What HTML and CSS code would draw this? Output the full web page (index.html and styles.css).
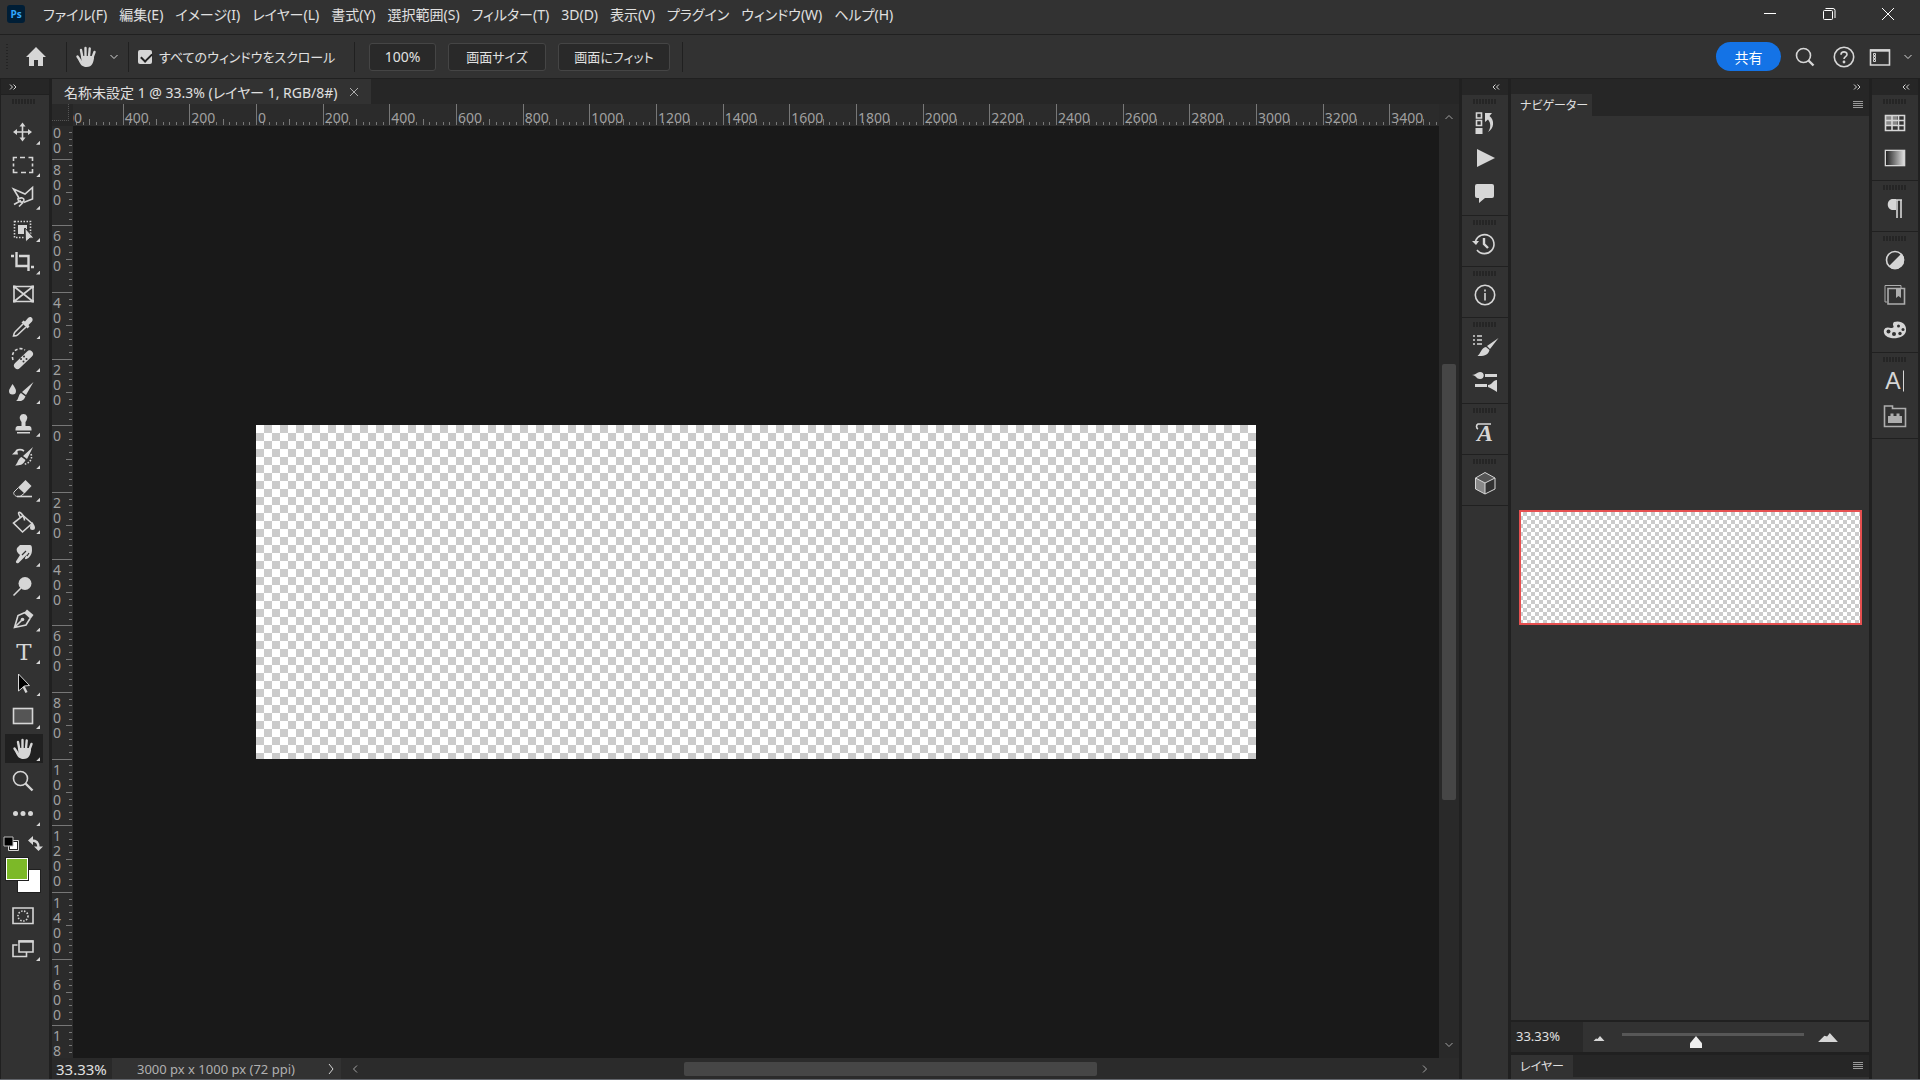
FILE: index.html
```html
<!DOCTYPE html>
<html lang="ja">
<head>
<meta charset="utf-8">
<title>名称未設定 1</title>
<link rel="stylesheet" href="styles.css">
</head>
<body>
<div class="app">
  <header class="menubar">
    <svg class="logo" viewBox="0 0 18 18"><rect width="18" height="18" rx="3" fill="#001e36"/><text x="9" y="13" text-anchor="middle" class="logo-text">Ps</text></svg>
    <nav class="menus">
      <button>ファイル(F)</button><button>編集(E)</button><button>イメージ(I)</button><button>レイヤー(L)</button><button>書式(Y)</button><button>選択範囲(S)</button><button>フィルター(T)</button><button>3D(D)</button><button>表示(V)</button><button>プラグイン</button><button>ウィンドウ(W)</button><button>ヘルプ(H)</button>
    </nav>
    <div class="window-controls">
      <button aria-label="最小化"><svg viewBox="0 0 14 14"><path class="thin" d="M1 6.5h12"/></svg></button>
      <button aria-label="元に戻す"><svg viewBox="0 0 14 14"><rect class="thin" x="1.5" y="3.500" width="9" height="9" rx="1"/><path class="thin" d="M3.500 1.500h7.500a2 2 0 0 1 2 2v7.500"/></svg></button>
      <button aria-label="閉じる"><svg viewBox="0 0 14 14"><path class="thin" d="M1 1l12 12M13 1L1 13"/></svg></button>
    </div>
  </header>

  <div class="options">
    <span class="grip-v"></span>
    <button class="home" aria-label="ホーム"><svg viewBox="0 0 22 20"><path class="f" d="M11 0L1 10h3v9h5v-6h4v6h5v-9h3z"/></svg></button>
    <button class="cell hand-opt" aria-label="手のひらツール"><svg class="i24" viewBox="0 0 24 24"><use href="#hand"/></svg><svg class="chev" viewBox="0 0 8 6"><path class="s" d="M.5 1L4 4.500L7.500 1"/></svg></button>
    <div class="cell scroll-all"><input type="checkbox" id="scroll-all" checked><label for="scroll-all">すべてのウィンドウをスクロール</label></div>
    <div class="cell fit-buttons"><button class="box w100">100%</button><button class="box wsize">画面サイズ</button><button class="box wfit">画面にフィット</button></div>
    <div class="cell options-end">
      <button class="share">共有</button>
      <button aria-label="検索"><svg class="i20" viewBox="0 0 20 20"><circle class="s2" cx="8.500" cy="8.500" r="7"/><path class="s3" d="M13.500 13.500l5 5"/></svg></button>
      <button aria-label="ヘルプ"><svg class="i22" viewBox="0 0 22 22"><circle class="s2" cx="11" cy="11" r="9.700"/><path class="s2" d="M8 8.700c0-3.700 6-3.700 6-.3 0 2.200-3 2.300-3 4.600"/><circle class="f" cx="11" cy="16" r="1.400"/></svg></button>
      <button class="workspace" aria-label="ワークスペース"><svg class="i22" viewBox="0 0 22 22"><path class="s2" d="M1.500 4h19v15h-19z"/><path class="s3" d="M1 4.500h20"/><path class="s" d="M4.500 7.500h2v2h-2zM4.500 10.500h2v2h-2zM4.500 13.500h2v2h-2z"/></svg><svg class="chev" viewBox="0 0 8 6"><path class="s" d="M.5 1L4 4.500L7.500 1"/></svg></button>
    </div>
  </div>

  <div class="workspace-grid">
    <aside class="toolbar">
      <button class="collapse to-start" aria-label="展開"><svg viewBox="0 0 8 6"><path class="s" d="M1 .5L3.500 3L1 5.500M4.500 .5L7 3L4.500 5.500"/></svg></button>
      <div class="tool-body">
        <span class="grip"></span>
        <div class="tools">
          <button class="more" aria-label="移動"><svg viewBox="0 0 24 24"><path class="s2" d="M11.500 5v14M4.500 12h14"/><path class="f" d="M11.500 2.500l3 4h-6zM11.500 21.500l3-4h-6zM2 12l4-3v6zM21 12l-4-3v6z"/></svg></button>
          <button class="more" aria-label="長方形選択"><svg viewBox="0 0 24 24"><path class="s2" d="M2.500 8V4.500H6M9 4.500h5M17.500 4.500h4V8M21.500 10.500v3M21.500 16v3.500H18M15 19.500h-5M6.500 19.500h-4V16M2.500 13.500v-3"/></svg></button>
          <button class="more" aria-label="多角形選択"><svg viewBox="0 0 24 24"><path class="s2" d="M8 13L2.500 4L14 9l7.500-6.500v11.500l-9 3.500"/><path class="s2" d="M8 14c2-2 5-1 5 1s-3 3-5 1-1-3 0-3M3 19.500l7-4M8 21.500l4-4"/></svg></button>
          <button class="more" aria-label="オブジェクト選択"><svg viewBox="0 0 24 24"><path class="s2 dots" d="M3.500 3.500h16v16h-16z"/><path class="f" d="M7 7h9v5l-3-2v6H7z"/><path class="f edge" d="M14 10l9 10-4 .2L14.500 24z"/></svg></button>
          <button class="more" aria-label="切り抜き"><svg viewBox="0 0 24 24"><path class="s3" d="M5.500 2v14h11M0 6h3M8 6h9.500v15M20 17h3"/></svg></button>
          <button aria-label="フレーム"><svg viewBox="0 0 24 24"><path class="s2" d="M3 4.500h19v15H3zM3 4.500l19 15M22 4.500l-19 15"/><path class="f" d="M2 3.500h2.500V6H2zM20.500 3.500H23V6h-2.500zM2 18h2.500v2.500H2zM20.500 18H23v2.500h-2.500z"/></svg></button>
          <button class="more" aria-label="スポイト"><svg viewBox="0 0 24 24"><path class="f" d="M10.500 7.500l2-2 1.500 1 3-3.500c3-3 6 1 4 3.500L17.500 10l1 1.500-2 2z"/><path class="s2" d="M12 9L4 17c-1 1-1 2-1.500 4 2 0 3 0 4-1L15 12"/></svg></button>
          <button class="more" aria-label="修復ブラシ"><svg viewBox="0 0 24 24"><path class="bandage" d="M6.500 18.500L18.500 7"/><path class="s2 dash" d="M2 13C-1 4 8-1 14 3"/><g fill="#323232"><circle cx="10" cy="12" r="1"/><circle cx="13" cy="9.500" r="1"/><circle cx="12.500" cy="14.500" r="1"/><circle cx="15.500" cy="12" r="1"/></g></svg></button>
          <button class="more" aria-label="ブラシ"><svg viewBox="0 0 24 24"><path class="f" d="M1.500 4c2 3 3.500 5 3.500 7a3.500 3.500 0 0 1-7 0c0-2 2-4 3.500-7z"/><path class="f" d="M22.500 2L15 15l-4-3zM10 13l4.500 3.500C12 22 9 21 5 21c3-2 2-6 5-8z"/></svg></button>
          <button class="more" aria-label="コピースタンプ"><svg viewBox="0 0 24 24"><path class="f" d="M12.500 2a4 4 0 0 1 3 6.500l-1 1.500v4h4a3 3 0 0 1 2 3v1.500h-16V17a3 3 0 0 1 2-3h4v-4L9.500 8.500a4 4 0 0 1 3-6.500zM6 20h13v1.500H6z"/></svg></button>
          <button class="more" aria-label="ヒストリーブラシ"><svg viewBox="0 0 24 24"><path class="f" d="M1 9.500l5-5 1 5z"/><path class="s2" d="M5 6c3-2 5-2 8 0"/><path class="s2 dots" d="M20 9c2 5-2 10-7 10"/><path class="f" d="M22 2l-6 12-4-3zM10.500 12l4 3C12 20 9 20.500 4 20.500c3-2 2.500-6.500 6.500-8.500z"/></svg></button>
          <button class="more" aria-label="消しゴム"><svg viewBox="0 0 24 24"><path class="f" d="M14.500 3l6 6-7 7.500-6.500-6z"/><path class="s" d="M7 11l-4 4c-1 2 1 4 3 4.500h3l4-3"/><path class="s2" d="M6 19.500h15"/></svg></button>
          <button class="more" aria-label="塗りつぶし"><svg viewBox="0 0 24 24"><path class="s2" d="M12 5.500l9 8-9.500 8.500L2.500 13z"/><path class="s2" d="M9.500 7.500C7 4 7 1.500 9 2.500s4.500 5 4.500 8"/><path class="f" d="M21.500 12c1.500 3 2.500 4 2.500 5.500a2.500 2.500 0 0 1-5 0c0-1.500 1-2.500 2.500-5.500z"/></svg></button>
          <button class="more" aria-label="指先"><svg viewBox="0 0 24 24"><path class="f" d="M6 6l3-3h10c2 0 2 3 2 5 0 5-3 8-5.500 9-1.500.5-2-.5-1-2l2-3-9 9c-2 1-3.500-1-2-2.500L9 13c-3-2-4-5-3-7z"/><path class="cut" d="M11 13l4-4M16 14l2-3"/></svg></button>
          <button class="more" aria-label="覆い焼き"><svg viewBox="0 0 24 24"><circle class="f" cx="14" cy="8.500" r="6.500"/><path class="s2" d="M10 13l-7.500 7.500"/></svg></button>
          <button class="more" aria-label="ペン"><svg viewBox="0 0 24 24"><path class="f" d="M16 2.500l6.500 5.500-3 4-6.500-6z"/><path class="s2" d="M14 5.500L7 8.500 3.500 20.500 15 18l4-6.500M3.500 20.500l7-7"/><circle class="f" cx="11.500" cy="12.500" r="1.800"/></svg></button>
          <button class="more" aria-label="文字"><svg viewBox="0 0 24 24"><text x="13" y="21" text-anchor="middle" class="type-icon">T</text></svg></button>
          <button class="more" aria-label="パス選択"><svg viewBox="0 0 24 24"><path class="path-arrow" d="M7.500 2l11 11.500-5 .5-6 5z"/><path class="s3" d="M12.500 14.500l3 6"/></svg></button>
          <button class="more" aria-label="長方形"><svg viewBox="0 0 24 24"><rect class="s2 fill-mid" x="2.500" y="4.500" width="19" height="15"/></svg></button>
          <button class="more active" aria-label="手のひら"><svg viewBox="0 0 24 24"><g id="hand"><path class="finger" d="M8.300 12L7 5M11.500 11.500V3M15 11.500L15.700 3.500M18.300 13L20.500 7M6.500 16L3.500 11.500"/><path class="f" d="M7 11h12.500l.5 2c-.5 4-1.500 9-7.500 9-4 0-6-2-8-7l3 1z"/></g></svg></button>
          <button aria-label="ズーム"><svg viewBox="0 0 24 24"><circle class="s2" cx="9.500" cy="9.500" r="7"/><path class="s3" d="M14.500 14.500l7 7"/></svg></button>
          <button class="more" aria-label="ツールバーを編集"><svg viewBox="0 0 24 24"><circle class="f" cx="4.500" cy="11.500" r="2.500"/><circle class="f" cx="12" cy="11.500" r="2.500"/><circle class="f" cx="19.500" cy="11.500" r="2.500"/></svg></button>
        </div>
        <div class="swatch-tools">
          <button aria-label="初期設定の色"><svg class="i16" viewBox="0 0 16 16"><path d="M6 5h9v9H6z" fill="#fff" stroke="#222" stroke-width="2"/><path class="s" d="M5.500 4.500h10v10h-10z"/><path d="M1 1h9v9H1z" fill="#000" stroke="#bbb"/></svg></button>
          <button aria-label="描画色と背景色を入れ替え"><svg class="i16" viewBox="0 0 16 16"><path class="s3" d="M5 4.500c5 0 6.500 3 6.500 7"/><path class="f" d="M1 4.500L6 0v9zM7 10.500h9L11.500 15z"/></svg></button>
        </div>
        <div class="colors"><button class="bg-color" aria-label="背景色"></button><button class="fg-color" aria-label="描画色"></button></div>
        <div class="modes">
          <button aria-label="クイックマスク"><svg viewBox="0 0 24 24"><path class="s2" d="M2 4h20v15.500H2z"/><circle class="s2 dots" cx="12" cy="12" r="5"/></svg></button>
          <button class="more" aria-label="スクリーンモード"><svg viewBox="0 0 24 24"><path class="s2" d="M6.500 8H2v11.500h13.500V15"/><path class="s2" d="M8 4h14v11H8z"/><path class="s3" d="M7.500 4.500h15"/></svg></button>
        </div>
      </div>
    </aside>

    <main class="document">
      <div class="tabs"><div class="tab"><span>名称未設定 1 @ 33.3% (レイヤー 1, RGB/8#)</span><button class="dim" aria-label="閉じる"><svg viewBox="0 0 10 10"><path class="s" d="M1 1l8 8M9 1L1 9"/></svg></button></div></div>
      <div class="stage">
        <div class="ruler-corner"></div>
        <div class="ruler ruler-x">
          <div class="strip">
            <svg class="ticks"><defs><pattern id="tx" width="200" height="21" patternUnits="userSpaceOnUse"><path class="tick" d="M.5 0v21M67.500 0v21M133.500 0v21M33.500 15v6M100.500 15v6M167.500 15v6M7.500 18v3M13.500 18v3M20.500 18v3M27.500 18v3M40.500 18v3M47.500 18v3M53.500 18v3M60.500 18v3M73.500 18v3M80.500 18v3M87.500 18v3M93.500 18v3M107.500 18v3M113.500 18v3M120.500 18v3M127.500 18v3M140.500 18v3M147.500 18v3M153.500 18v3M160.500 18v3M173.500 18v3M180.500 18v3M187.500 18v3M193.500 18v3"/></pattern></defs><rect width="100%" height="100%" fill="url(#tx)"/></svg>
            <span>600</span><span>400</span><span>200</span><span>0</span><span>200</span><span>400</span><span>600</span><span>800</span><span>1000</span><span>1200</span><span>1400</span><span>1600</span><span>1800</span><span>2000</span><span>2200</span><span>2400</span><span>2600</span><span>2800</span><span>3000</span><span>3200</span><span>3400</span>
          </div>
        </div>
        <div class="ruler ruler-y">
          <div class="strip">
            <svg class="ticks"><defs><pattern id="ty" width="20" height="200" patternUnits="userSpaceOnUse"><path class="tick" d="M0 .5h20M0 67.500h20M0 133.500h20M14 33.500h6M14 100.500h6M14 167.500h6M17 7.500h3M17 13.500h3M17 20.500h3M17 27.500h3M17 40.500h3M17 47.500h3M17 53.500h3M17 60.500h3M17 73.500h3M17 80.500h3M17 87.500h3M17 93.500h3M17 107.500h3M17 113.500h3M17 120.500h3M17 127.500h3M17 140.500h3M17 147.500h3M17 153.500h3M17 160.500h3M17 173.500h3M17 180.500h3M17 187.500h3M17 193.500h3"/></pattern></defs><rect width="20" height="100%" fill="url(#ty)"/></svg>
            <span>1000</span><span>800</span><span>600</span><span>400</span><span>200</span><span>0</span><span>200</span><span>400</span><span>600</span><span>800</span><span>1000</span><span>1200</span><span>1400</span><span>1600</span><span>1800</span>
          </div>
        </div>
        <div class="canvas-area"><div class="artboard"></div></div>
        <div class="scroll-y">
          <button aria-label="上へ"><svg class="chev" viewBox="0 0 8 6"><path class="s" d="M.5 5L4 1.500L7.500 5"/></svg></button>
          <div class="track-y"><div class="thumb"></div></div>
          <button aria-label="下へ"><svg class="chev" viewBox="0 0 8 6"><path class="s" d="M.5 1L4 4.500L7.500 1"/></svg></button>
        </div>
      </div>
      <footer class="status">
        <input class="zoom-value" aria-label="ズーム率" value="33.33%">
        <div class="doc-info"><span>3000 px x 1000 px (72 ppi)</span><button aria-label="情報"><svg viewBox="0 0 6 12"><path class="s" d="M1 1l4 5-4 5"/></svg></button></div>
        <div class="scroll-x">
          <button aria-label="左へ"><svg viewBox="0 0 6 8"><path class="s" d="M5 .5L1.500 4L5 7.500"/></svg></button>
          <div class="track-x"><div class="thumb"></div></div>
          <button aria-label="右へ"><svg viewBox="0 0 6 8"><path class="s" d="M1 .5L4.500 4L1 7.500"/></svg></button>
        </div>
      </footer>
    </main>

    <aside class="dock">
      <button class="collapse to-end" aria-label="展開"><svg viewBox="0 0 8 6"><path class="s" d="M3.500 .5L1 3L3.500 5.500M7 .5L4.500 3L7 5.500"/></svg></button>
      <div class="group"><span class="grip"></span>
        <button aria-label="バージョン"><svg viewBox="0 0 24 24"><path class="s2" d="M3.500 2h5v5h-5zM3.500 9.500h5v5h-5z"/><path class="f" d="M2.500 17h7v6h-7zM12 2h7l-2.500 3C22 9 21 18 15 21c3-4 3-9 0-12.500L12 11z"/></svg></button>
        <button aria-label="アクション"><svg viewBox="0 0 24 24"><path class="f" d="M4 3l18 9L4 21z"/></svg></button>
        <button aria-label="コメント"><svg viewBox="0 0 24 24"><path class="f" d="M4 3h15a2 2 0 0 1 2 2v10a2 2 0 0 1-2 2h-7l-6 5v-5H4a2 2 0 0 1-2-2V5a2 2 0 0 1 2-2z"/></svg></button></div>
      <div class="group"><span class="grip"></span>
        <button aria-label="ヒストリー"><svg viewBox="0 0 24 24"><path class="s2" d="M2.500 9A9.500 9.500 0 1 1 4 18"/><path class="f" d="M-1 9h7l-3 4z"/><path class="s3" d="M11 6v6l4 4"/></svg></button></div>
      <div class="group"><span class="grip"></span>
        <button aria-label="情報"><svg viewBox="0 0 24 24"><circle class="s2" cx="12" cy="12" r="9.700"/><path class="s2" d="M12 10v7.500M12 6.500v2"/></svg></button></div>
      <div class="group"><span class="grip"></span>
        <button aria-label="ブラシ設定"><svg viewBox="0 0 24 24"><path class="s2" d="M0 2h2M0 6h2M0 10h2M4 2h5M4 6h5M4 10h5"/><path class="f" d="M25.500 4L17 15l-3-3zM13 13l3.500 3C15 22 10 22 4.500 22c3-2 3.500-8 8.500-9z"/></svg></button>
        <button aria-label="ブラシ"><svg viewBox="0 0 24 24"><path class="f" d="M-1 6c4 0 5-3 8-3 5 0 5 7 0 7-4 0-4-4-8-4zM12 5h12v3H12zM2 15h12v3H2zM15 16c4 0 5-5 9-5v12c-3-2-6-4-9-5z"/></svg></button></div>
      <div class="group"><span class="grip"></span>
        <button aria-label="字形"><svg viewBox="0 0 24 24"><text x="12" y="21" text-anchor="middle" class="glyph-icon">A</text><path class="s2" d="M9 4H5c-2 1-2 4 0 5M9 4h9"/></svg></button></div>
      <div class="group"><span class="grip"></span>
        <button aria-label="3D"><svg viewBox="0 0 24 24"><path fill="#555" d="M12 1.500L22 7l-10 5L2.500 7z"/><path fill="#888" d="M2.500 7l9.500 5v11l-9.500-5z"/><path class="s" d="M12 1.500L22 7v11l-10 5-9.500-5V7zM2.500 7l9.500 5 10-5M12 12v11"/></svg></button></div>
    </aside>

    <aside class="panel">
      <button class="collapse to-end" aria-label="折りたたむ"><svg viewBox="0 0 8 6"><path class="s" d="M1 .5L3.500 3L1 5.500M4.500 .5L7 3L4.500 5.500"/></svg></button>
      <div class="panel-tabs"><button class="panel-tab">ナビゲーター</button><button class="panel-menu" aria-label="メニュー"></button></div>
      <div class="navigator"><div class="preview"></div></div>
      <div class="nav-controls">
        <input aria-label="ズーム率" value="33.33%">
        <button aria-label="ズームアウト"><svg class="hill-s" viewBox="0 0 22 10"><path class="f" d="M0 10l5-5 3 1 5-6 9 10z"/></svg></button>
        <input type="range" aria-label="ズーム" min="0" max="100" value="40">
        <button aria-label="ズームイン"><svg class="hill-l" viewBox="0 0 22 10"><path class="f" d="M0 10l7-7 3 1 3-4 9 10z"/></svg></button>
      </div>
      <div class="panel-tabs layers"><button class="panel-tab">レイヤー</button><button class="panel-menu" aria-label="メニュー"></button></div>
    </aside>

    <aside class="dock">
      <button class="collapse to-end" aria-label="展開"><svg viewBox="0 0 8 6"><path class="s" d="M3.500 .5L1 3L3.500 5.500M7 .5L4.500 3L7 5.500"/></svg></button>
      <div class="group"><span class="grip"></span>
        <button aria-label="スウォッチ"><svg viewBox="0 0 24 24"><path fill="#888" d="M2 4h12v10H2z"/><path class="s2" d="M2.500 4.500h19v15h-19zM2.500 9.500h19M2.500 14.500h19M9 4.500v15M15.500 4.500v15"/></svg></button>
        <button aria-label="グラデーション"><svg viewBox="0 0 24 24"><defs><linearGradient id="grad"><stop offset="0" stop-color="#222"/><stop offset="1" stop-color="#ddd"/></linearGradient></defs><rect class="s2" x="2.500" y="4.500" width="19" height="15"/><path fill="url(#grad)" d="M3 5h18v14H3z"/></svg></button></div>
      <div class="group"><span class="grip"></span>
        <button aria-label="段落"><svg viewBox="0 0 24 24"><path class="f" d="M13 2v11h-3C3 13 3 2 10 2z"/><path class="s2" d="M10 3h9M14 3v18M18 3v18"/></svg></button></div>
      <div class="group"><span class="grip"></span>
        <button aria-label="色調補正"><svg viewBox="0 0 24 24"><circle class="s2" cx="12" cy="12" r="8.500"/><path class="f" d="M18.500 5.500a9 9 0 0 1-13 13z"/></svg></button>
        <button class="dim" aria-label="ライブラリ"><svg viewBox="0 0 24 24"><path class="s" d="M4 19H2V2.500h16V5"/><path class="s2" d="M5 5.500h16.500V21H5z"/><path class="f" d="M13 6h5v9l-2.500-2L13 15z"/></svg></button>
        <button aria-label="カラー"><svg viewBox="0 0 24 24"><path class="f" d="M11 4c7-2 13 2 12 9-1 6-9 8-15 7-5-1-8-4-7-8 1-3 4-3 7-2 3 0 3-1 2-3 0-1 0-2 1-3z"/><g fill="#323232"><circle cx="5.500" cy="13.500" r="2"/><circle cx="11" cy="16" r="2"/><circle cx="17" cy="15.500" r="1.700"/><circle cx="20" cy="11.500" r="1.500"/><circle cx="15.500" cy="8" r="1.500"/></g></svg></button></div>
      <div class="group"><span class="grip"></span>
        <button aria-label="文字"><svg viewBox="0 0 24 24"><text x="10" y="20" text-anchor="middle" class="char-icon">A</text><path class="s" d="M20.500 1.500v21"/></svg></button>
        <button class="dim" aria-label="プラグイン"><svg viewBox="0 0 24 24"><path class="s2" d="M1.500 2h8v2.500h13v18h-21z"/><path class="f" d="M5 12h2.500V9.500h3V12h3V9.500h3V12H19v7H5z"/></svg></button></div>
    </aside>
  </div>
</div>
</body>
</html>
```
FILE: styles.css
```css
:root {
  --panel: #323232;
  --well: #262626;
  --line: #202020;
  --field: #292929;
  --icon: #d6d6d6;
  --checker: repeating-conic-gradient(#cbcbcb 0 25%, #fff 0 50%);
}
* { box-sizing: border-box; }
body {
  margin: 0;
  background: var(--well);
  color: #e0e0e0;
  font-family: "Noto Sans", "Noto Sans CJK JP", sans-serif;
  font-size: 14px;
  font-feature-settings: "palt";
}
button, input {
  margin: 0;
  padding: 0;
  border: 0;
  background: none;
  color: inherit;
  font: inherit;
  font-feature-settings: inherit;
}
button { display: flex; align-items: center; justify-content: center; white-space: nowrap; }
svg { display: block; overflow: visible; flex: none; }

.f { fill: var(--icon); }
.s, .s2, .s3, .thin { fill: none; stroke: var(--icon); }
.s2 { stroke-width: 1.6; }
.s3 { stroke-width: 2.4; }
.thin { stroke: #fff; }
.dots { stroke-dasharray: 1.500 1.500; }
.dash { stroke-dasharray: 3 2; }
.edge { stroke: var(--panel); }
.cut { fill: none; stroke: var(--panel); stroke-width: 1.200; }
.finger { fill: none; stroke: var(--icon); stroke-width: 2.400; stroke-linecap: round; }
.bandage { fill: none; stroke: var(--icon); stroke-width: 7; stroke-linecap: round; }
.path-arrow { fill: #000; stroke: var(--icon); }
.fill-mid { fill: #555; }
.type-icon { fill: var(--icon); font: 23px "DejaVu Serif", serif; }
.glyph-icon { fill: var(--icon); font: italic bold 24px "Liberation Serif", serif; }
.char-icon { fill: var(--icon); font: 23px "Liberation Sans", sans-serif; }
.logo-text { fill: #31a8ff; font: bold 10px "Open Sans", sans-serif; }
.i16 { width: 16px; height: 16px; }
.i20 { width: 20px; height: 20px; }
.i22 { width: 22px; height: 22px; }
.i24 { width: 24px; height: 24px; }
.chev { width: 8px; height: 6px; }

.app {
  height: 100vh;
  display: grid;
  grid-template-rows: 35px 44px 1fr;
  border-bottom: 1px solid #62656b;
}

/* Menu bar */
.menubar {
  display: flex;
  align-items: center;
  background: var(--panel);
  border-bottom: 1px solid var(--line);
  padding: 0 18px 6px 7px;
}
.logo { width: 18px; height: 18px; margin-right: 18px; }
.menus { display: flex; gap: 12px; flex: 1; }
.window-controls { display: flex; gap: 31px; }
.window-controls button { width: 28px; height: 28px; }
.window-controls svg { width: 14px; height: 14px; }

/* Options bar */
.options {
  display: flex;
  align-items: center;
  background: var(--panel);
  border-bottom: 1px solid var(--line);
}
.grip-v {
  width: 2px;
  height: 26px;
  margin-left: 6px;
  background: repeating-linear-gradient(#242424 0 1px, transparent 1px 3px);
}
.home { width: 58px; padding-right: 2px; }
.home svg { width: 22px; height: 20px; }
.cell {
  display: flex;
  align-items: center;
  height: 30px;
  border-left: 1px solid var(--line);
}
.hand-opt { width: 62px; gap: 12px; padding-right: 3px; }
.scroll-all { width: 226px; padding-left: 9px; gap: 7px; font-size: 13px; }
.scroll-all input {
  appearance: none;
  width: 14px;
  height: 14px;
  border-radius: 2px;
  background: var(--icon);
}
.scroll-all input:checked::before {
  content: "";
  display: block;
  width: 9px;
  height: 5px;
  margin: 3px 0 0 3px;
  border: solid #222;
  border-width: 0 0 2px 2px;
  transform: rotate(-45deg);
}
.fit-buttons { width: 328px; padding-left: 14px; gap: 12px; }
.box {
  height: 28px;
  border: 1px solid #454545;
  border-radius: 3px;
  background: var(--field);
  font-size: 13px;
}
.w100 { width: 67px; font-size: 14px; }
.wsize { width: 98px; }
.wfit { width: 112px; }
.options-end { flex: 1; justify-content: flex-end; gap: 18px; padding-right: 8px; }
.share {
  width: 65px;
  height: 29px;
  border-radius: 15px;
  background: #1473e6;
  color: #fff;
  margin-right: -4px;
}
.workspace { gap: 13px; margin-left: -4px; }

/* Workspace columns */
.workspace-grid {
  display: grid;
  grid-template-columns: 48px 1fr 46px 358px 46px;
  column-gap: 3px;
  padding: 0 2px 0 1px;
  min-height: 0;
  background: var(--line);
}
.collapse {
  width: 100%;
  height: 15px;
  flex: none;
  padding: 0 8px;
  background: var(--well);
}
.collapse svg { width: 8px; height: 6px; }
.to-start { justify-content: flex-start; }
.to-end { justify-content: flex-end; }
.grip {
  display: block;
  width: 24px;
  height: 5px;
  background: repeating-linear-gradient(90deg, #252525 0 2px, transparent 2px 3px);
}

/* Tools */
.toolbar { display: flex; flex-direction: column; min-height: 0; }
.tool-body {
  flex: 1;
  background: var(--panel);
  border-top: 1px solid var(--line);
  padding: 4px 5px 0 4px;
}
.tool-body > .grip { margin: 0 0 12px 7px; }
.tools {
  height: 714px;
  display: grid;
  grid-template-rows: repeat(22, 1fr);
  align-items: center;
}
.tools button, .modes button {
  position: relative;
  width: 38px;
  height: 29px;
  padding-right: 2px;
}
.tools svg, .modes svg { width: 24px; height: 24px; }
.more::after {
  content: "";
  position: absolute;
  right: 3px;
  bottom: 2px;
  width: 4px;
  height: 4px;
  background: var(--icon);
  clip-path: polygon(100% 0, 100% 100%, 0 100%);
}
.tools .active { background: #202020; }
.swatch-tools { display: flex; justify-content: space-between; padding: 6px 1px 0 0; margin-left: -2px; }
.colors { position: relative; height: 36px; margin-top: 5px; }
.colors button {
  position: absolute;
  width: 24px;
  height: 24px;
  border: 1px solid var(--line);
}
.fg-color { left: 0; top: 0; background: #7cb928; box-shadow: inset 0 0 0 1px #fff; }
.bg-color { left: 12px; top: 12px; background: #fff; }
.modes { padding-top: 8px; display: grid; gap: 4px; }

/* Document */
.document {
  display: grid;
  grid-template-rows: 25px 1fr 21px;
  min-width: 0;
  min-height: 0;
  background: var(--well);
}
.tabs { display: flex; }
.tab {
  display: flex;
  align-items: center;
  gap: 11px;
  padding: 0 12px;
  background: var(--panel);
  white-space: nowrap;
}
.tab svg { width: 10px; height: 10px; }
.stage {
  display: grid;
  grid-template: 22px minmax(0, 1fr) / 21px minmax(0, 1fr) 20px;
  min-height: 0;
}
.ruler-corner {
  background: var(--field);
  border-right: 1px dotted #555;
  border-bottom: 1px dotted #555;
  margin: 0 4px 5px 0;
}
.ruler {
  display: flex;
  justify-content: center;
  overflow: hidden;
  background: #2b2b2b;
  color: #a0a0a0;
  line-height: 15px;
}
.strip { position: relative; flex: none; display: grid; }
.ticks { position: absolute; width: 100%; height: 100%; }
.tick { stroke: #777; }
.ruler-x .strip { width: 1400px; height: 21px; grid-template-columns: repeat(21, 1fr); }
.ruler-x span { padding: 6px 0 0 2px; position: relative; }
.ruler-y { grid-area: 2 / 1; align-items: center; }
.ruler-y .strip { width: 21px; height: 1000px; grid-template-rows: repeat(15, 1fr); }
.ruler-y span {
  position: relative;
  width: 10px;
  padding: 3px 0 0 1px;
  word-break: break-all;
  overflow: hidden;
}
.canvas-area {
  grid-area: 2 / 2;
  display: grid;
  place-content: center;
  overflow: hidden;
  background: #191919;
}
.artboard {
  width: 1000px;
  height: 334px;
  background: var(--checker) 0 0 / 16px 16px;
}
.scroll-y {
  grid-area: 1 / 3 / 3 / 4;
  display: flex;
  flex-direction: column;
  align-items: center;
  background: var(--field);
}
.scroll-y button { width: 20px; height: 26px; opacity: .7; }
.track-y { flex: 1; width: 14px; padding: 234px 0 232px; display: grid; }
.thumb { background: #464646; border-radius: 2px; }
.status { display: flex; background: var(--field); }
.zoom-value { width: 60px; padding-left: 4px; background: var(--field); color: #e0e0e0; font-size: 15px; }
.doc-info {
  width: 229px;
  display: flex;
  align-items: center;
  justify-content: space-between;
  padding: 0 7px 0 25px;
  background: var(--panel);
  color: #b0b0b0;
  font-size: 13px;
}
.doc-info svg { width: 6px; height: 12px; }
.scroll-x { flex: 1; display: flex; align-items: center; padding-right: 20px; background: #2b2b2b; }
.scroll-x button { width: 28px; height: 20px; opacity: .7; }
.scroll-x svg { width: 6px; height: 8px; }
.track-x { flex: 1; height: 14px; padding: 0 314px 0 315px; display: grid; }

/* Icon docks */
.dock { background: var(--panel); }
.dock .collapse { height: 16px; }
.group {
  position: relative;
  display: flex;
  flex-direction: column;
  align-items: center;
  padding: 10px 0 5px;
  border-bottom: 1px solid var(--line);
}
.group .grip { position: absolute; top: 4px; left: 11px; }
.group button { width: 46px; height: 35px; }
.group svg { width: 24px; height: 24px; }
.dim { opacity: .75; }

/* Navigator panel */
.panel { display: flex; flex-direction: column; background: var(--panel); min-width: 0; }
.panel-tabs {
  display: flex;
  justify-content: space-between;
  height: 22px;
  flex: none;
  padding-right: 6px;
  background: var(--well);
}
.panel-tab { padding: 0 4px 0 9px; background: var(--panel); font-size: 12px; }
.panel-menu {
  width: 10px;
  height: 8px;
  margin-top: 7px;
  background: repeating-linear-gradient(#999 0 1px, transparent 1px 2px);
}
.navigator { flex: 1; display: grid; place-content: center; padding-bottom: 1px; }
.preview {
  width: 343px;
  height: 115px;
  border: 2px solid #e65050;
  background: var(--checker) -2px 0 / 8px 8px;
}
.nav-controls {
  display: flex;
  align-items: center;
  height: 35px;
  border: solid var(--line);
  border-width: 2px 0 3px;
  font-size: 13px;
}
.nav-controls input[aria-label="ズーム率"] { width: 72px; height: 30px; padding: 0 0 2px 5px; background: var(--field); }
.nav-controls button { width: 36px; height: 30px; }
.hill-s { width: 12px; height: 5px; margin: 3px 4px 0 0; }
.hill-l { width: 22px; height: 9px; }
.nav-controls input[type="range"] {
  appearance: none;
  width: 182px;
  height: 26px;
  margin: 0 6px 0 3px;
}
.nav-controls input::-webkit-slider-runnable-track { height: 3px; margin-bottom: 5px; background: #575757; }
.nav-controls input::-webkit-slider-thumb {
  appearance: none;
  width: 12px;
  height: 12px;
  margin-top: 3px;
  background: #eee;
  clip-path: polygon(50% 0, 100% 60%, 100% 100%, 0 100%, 0 60%);
}
.layers { margin-bottom: 2px; }
.layers .panel-tab { padding-right: 9px; }
```
